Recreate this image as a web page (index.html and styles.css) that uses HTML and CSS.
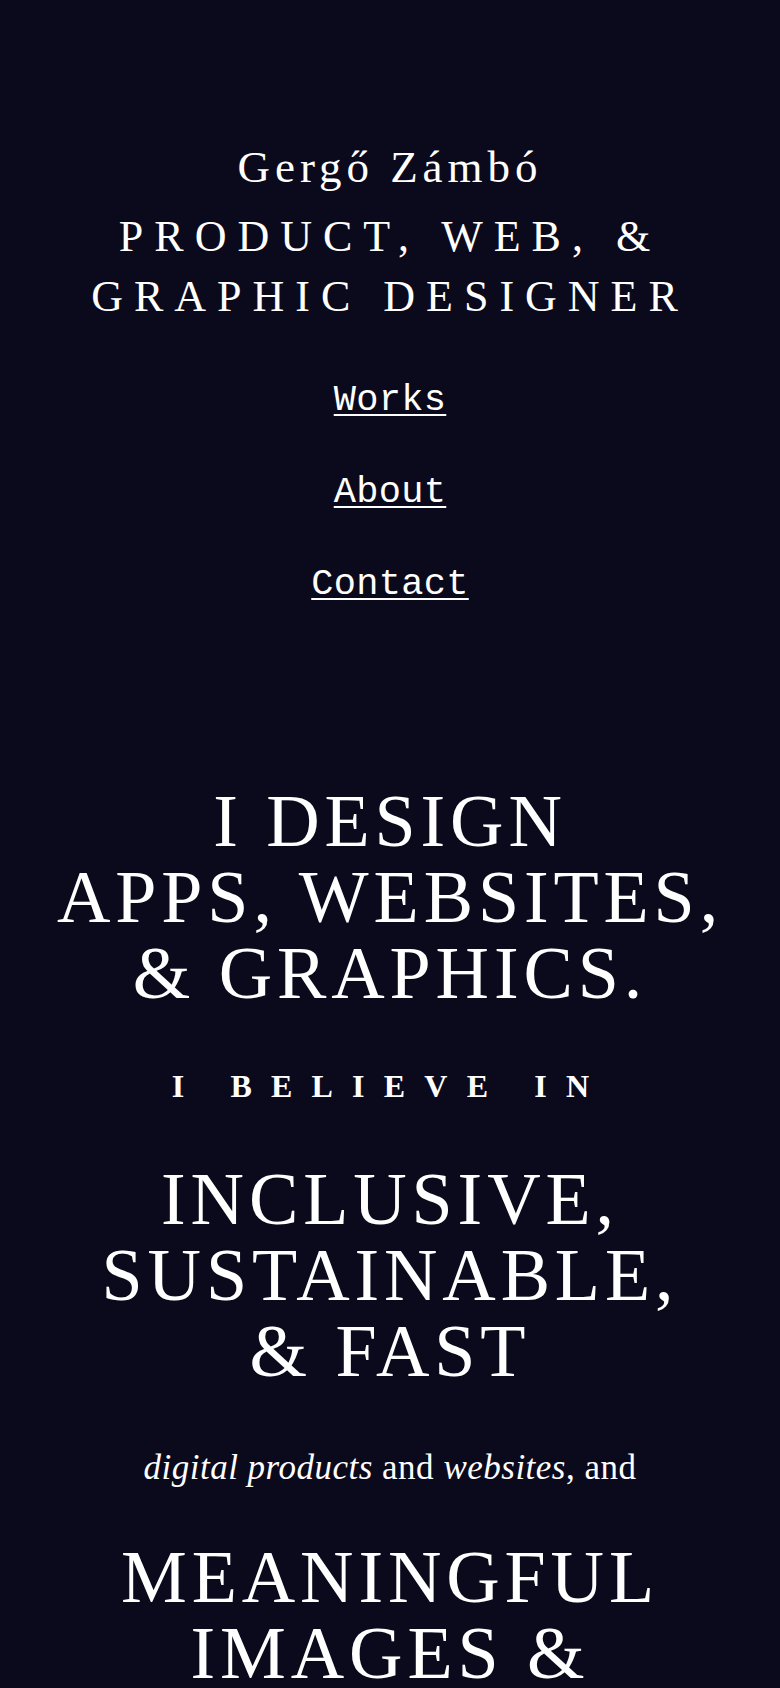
FILE: index.html
```html
<!DOCTYPE html>
<html lang="en">
<head>
<meta charset="utf-8">
<title>Gergő Zámbó</title>
<link rel="stylesheet" href="styles.css">
</head>
<body>
<header class="masthead">
  <h1 class="name">Gergő Zámbó</h1>
  <p class="role">PRODUCT, WEB, &amp;<br>GRAPHIC DESIGNER</p>
  <nav class="nav">
    <a href="#works">Works</a>
    <a href="#about">About</a>
    <a href="#contact">Contact</a>
  </nav>
</header>
<main class="intro">
  <h2 class="big">I DESIGN<br>APPS, WEBSITES,<br>&amp; GRAPHICS.</h2>
  <p class="believe">I BELIEVE IN</p>
  <h2 class="big">INCLUSIVE,<br>SUSTAINABLE,<br>&amp; FAST</h2>
  <p class="lead"><em>digital products</em> and <em>websites</em>, and</p>
  <h2 class="big">MEANINGFUL<br>IMAGES &amp;<br>ILLUSTRATIONS</h2>
</main>
</body>
</html>
```
FILE: styles.css
```css
html, body {
  margin: 0;
  padding: 0;
  background: #0b0a1c;
  color: #ffffff;
}
body {
  font-family: "Liberation Serif", "Times New Roman", serif;
  text-align: center;
}
.masthead {
  display: flex;
  flex-direction: column;
  align-items: center;
  padding-top: 140px;
}
.name {
  margin: 0;
  font-size: 45px;
  line-height: 54px;
  font-weight: normal;
  letter-spacing: 0.11em;
}
.role {
  margin: 13px 0 0;
  font-size: 44px;
  line-height: 60px;
  letter-spacing: 0.25em;
}
.nav {
  display: flex;
  flex-direction: column;
  align-items: center;
  gap: 48px;
  margin-top: 51px;
}
.nav a {
  font-family: "Liberation Mono", "Courier New", monospace;
  font-size: 37px;
  line-height: 44px;
  letter-spacing: 0.3px;
  color: #ffffff;
  text-decoration: underline;
  text-decoration-thickness: 2px;
  text-underline-offset: 4px;
}
.intro {
  display: flex;
  flex-direction: column;
  align-items: center;
  gap: 55px;
  padding-top: 177px;
}
.big {
  margin: 0;
  font-size: 74px;
  line-height: 76px;
  font-weight: normal;
  letter-spacing: 0.066em;
}
.believe {
  margin: 0;
  font-size: 32px;
  line-height: 40px;
  font-weight: bold;
  letter-spacing: 0.6em;
}
.lead {
  margin: 0 0 -4px;
  padding-top: 4px;
  font-size: 35px;
  line-height: 40px;
  letter-spacing: 0.5px;
}
.lead em {
  font-style: italic;
}
```
